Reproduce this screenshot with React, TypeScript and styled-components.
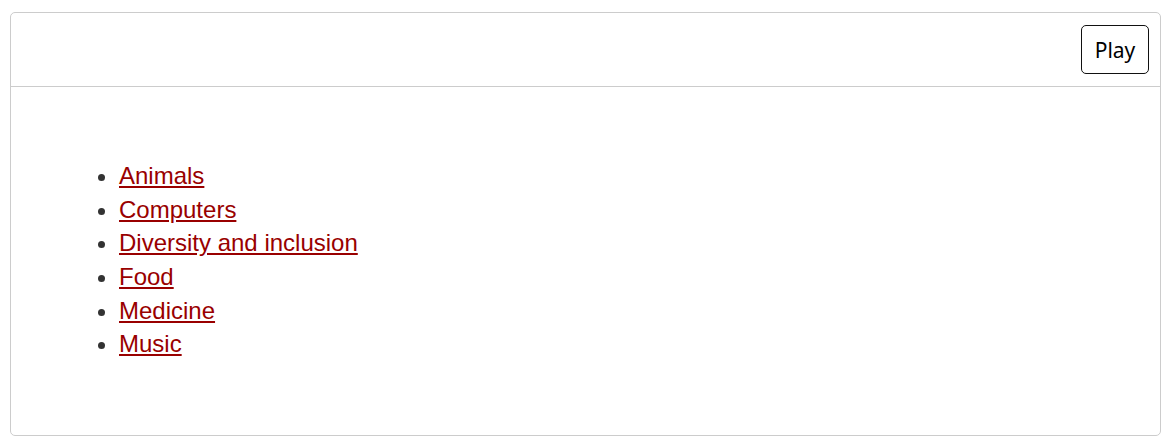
import styled, { createGlobalStyle } from "styled-components";

const GlobalStyle = createGlobalStyle`
  body {
    margin: 0;
    background: #ffffff;
    font-family: "Liberation Sans", Arial, sans-serif;
  }
`;

const topics = [
  "Animals",
  "Computers",
  "Diversity and inclusion",
  "Food",
  "Medicine",
  "Music",
];

const App = () => {
  return (
    <>
      <GlobalStyle />
      <Card>
        <Header>
          <PlayButton type="button">Play</PlayButton>
        </Header>
        <Body>
          <TopicList>
            {topics.map((topic) => (
              <TopicItem key={topic}>
                <TopicLink href="#">{topic}</TopicLink>
              </TopicItem>
            ))}
          </TopicList>
        </Body>
      </Card>
    </>
  );
};
export default App;

const Card = styled.div`
  box-sizing: border-box;
  margin: 12px 11px 0 10px;
  width: 1151px;
  height: 424px;
  border: 1px solid #cccccc;
  border-radius: 5px;
  display: flex;
  flex-direction: column;
`;
const Header = styled.div`
  display: flex;
  justify-content: flex-end;
  padding: 12px 11px 12px 12px;
  border-bottom: 1px solid #cccccc;
`;
const PlayButton = styled.button`
  box-sizing: border-box;
  width: 68px;
  height: 49px;
  background: #ffffff;
  border: 1px solid #111111;
  border-radius: 5px;
  font-family: "Noto Sans", "Open Sans", sans-serif;
  font-size: 21px;
  color: #000000;
  padding: 0;
  cursor: pointer;
`;
const Body = styled.div`
  flex: 1;
  display: flex;
  align-items: center;
  padding-left: 68px;
  padding-bottom: 2px;
`;
const TopicList = styled.ul`
  margin: 0;
  padding-left: 40px;
  color: #333333;
`;
const TopicItem = styled.li`
  font-size: 24px;
  line-height: 33.6px;
`;
const TopicLink = styled.a`
  color: #990000;
  text-decoration: underline;
`;
